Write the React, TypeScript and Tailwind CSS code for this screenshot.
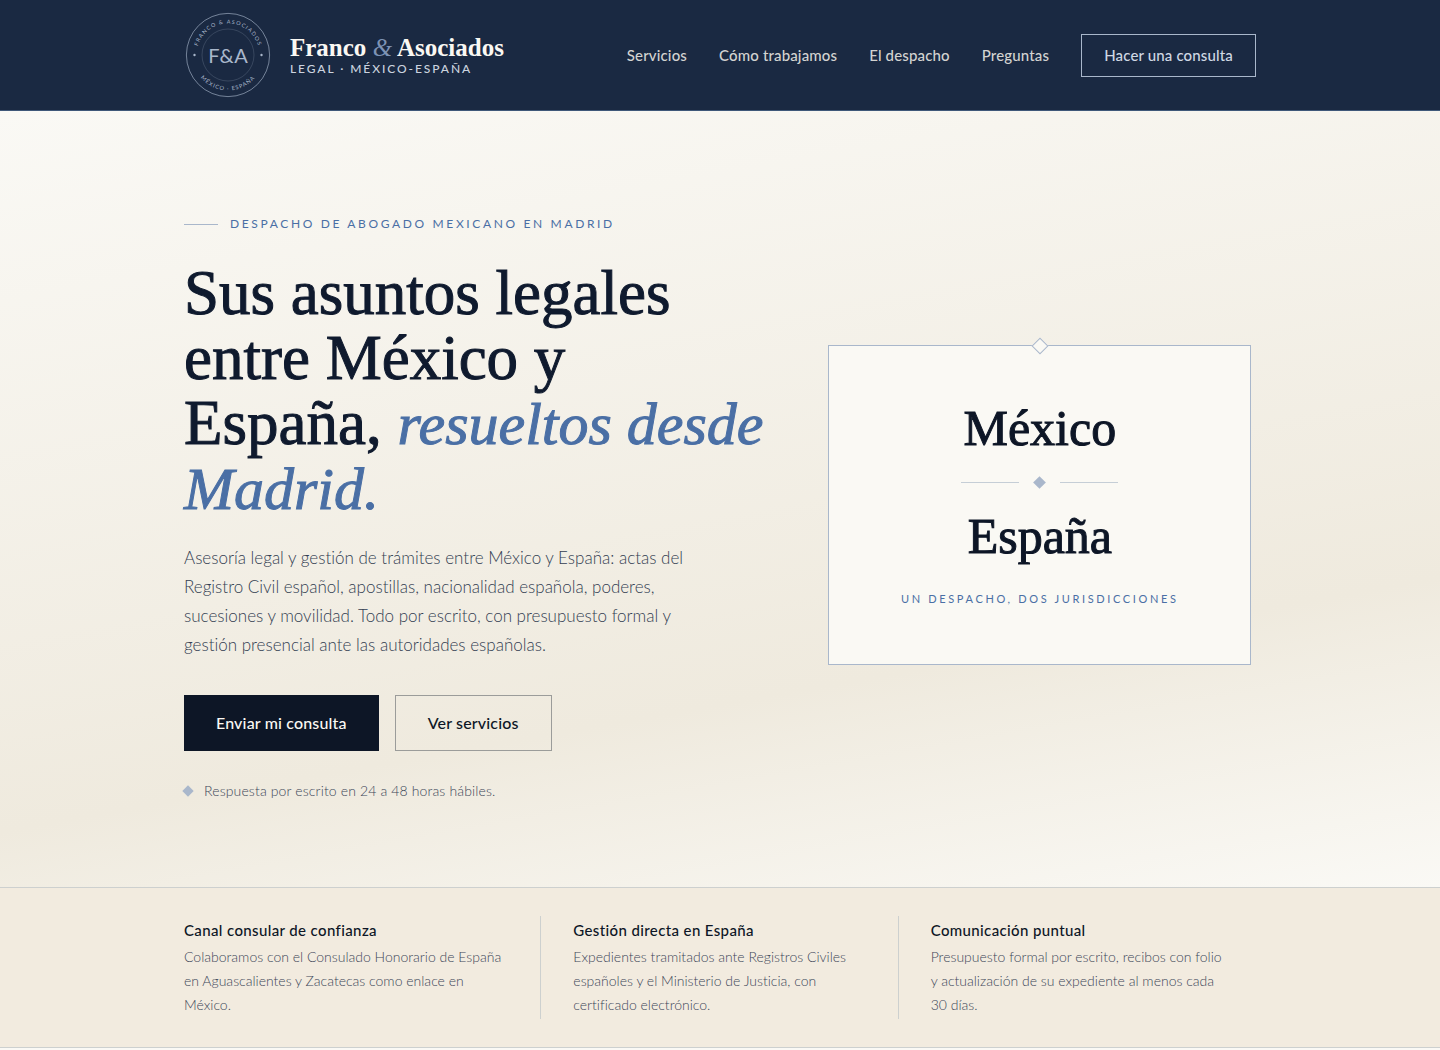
import { clsx } from 'clsx';

/* ─── Content ─── */
const navLinks = [
  { label: 'Servicios', href: '#servicios' },
  { label: 'Cómo trabajamos', href: '#como-trabajamos' },
  { label: 'El despacho', href: '#despacho' },
  { label: 'Preguntas', href: '#preguntas' },
];

const features = [
  {
    title: 'Canal consular de confianza',
    text: 'Colaboramos con el Consulado Honorario de España en Aguascalientes y Zacatecas como enlace en México.',
  },
  {
    title: 'Gestión directa en España',
    text: 'Expedientes tramitados ante Registros Civiles españoles y el Ministerio de Justicia, con certificado electrónico.',
  },
  {
    title: 'Comunicación puntual',
    text: 'Presupuesto formal por escrito, recibos con folio y actualización de su expediente al menos cada 30 días.',
  },
];

const serif = "font-['Liberation_Serif',serif]";

/* ─── Round seal ─── */
function Seal() {
  return (
    <svg viewBox="0 0 88 88" className="size-22 shrink-0 text-[#a9b7cb]" fill="none" aria-hidden="true">
      <defs>
        <path id="seal-top" d="M 12.5 44 A 31.5 31.5 0 0 1 75.5 44" />
        <path id="seal-bottom" d="M 8.5 44 A 35.5 35.5 0 0 0 79.5 44" />
      </defs>
      <circle cx="44" cy="44" r="41.6" stroke="currentColor" strokeWidth="0.8" opacity="0.8" />
      <circle cx="44" cy="44" r="26" stroke="currentColor" strokeWidth="0.6" opacity="0.35" />
      <circle cx="10.5" cy="44" r="1.2" fill="currentColor" />
      <circle cx="77.5" cy="44" r="1.2" fill="currentColor" />
      <g fill="currentColor" textAnchor="middle">
        <text fontSize="5.4" letterSpacing="1.2">
          <textPath href="#seal-top" startOffset="50%">FRANCO &amp; ASOCIADOS</textPath>
        </text>
        <text fontSize="5.6" letterSpacing="1">
          <textPath href="#seal-bottom" startOffset="50%">MÉXICO · ESPAÑA</textPath>
        </text>
        <text x="44" y="52" fontSize="20">F&amp;A</text>
      </g>
    </svg>
  );
}

function Diamond({ className }: { className?: string }) {
  return <span className={clsx('block rotate-45 shrink-0', className)} aria-hidden="true" />;
}

/* ─── Header ─── */
function Header() {
  return (
    <header className="bg-[#1a2942] border-b border-[#3f5879]">
      <div className="max-w-[1120px] mx-auto px-6 py-[11px] flex flex-wrap items-center justify-between gap-6">
        <a href="#inicio" className="flex items-center gap-[18px]">
          <Seal />
          <span className="block">
            <span className={clsx('block text-[25px] leading-7 font-bold text-[#faf8f3]', serif)}>
              Franco <em className="font-normal text-[#7d93b5]">&amp;</em> Asociados
            </span>
            <span className="block text-xs leading-[14px] tracking-[0.16em] font-medium uppercase text-[#cbd3df]">
              Legal · México-España
            </span>
          </span>
        </a>
        <nav
          className="flex flex-wrap items-center gap-8 text-[15px] font-medium tracking-[0.01em] text-[#d3d3d1]"
          aria-label="Principal"
        >
          {navLinks.map((link) => (
            <a key={link.href} href={link.href} className="hover:text-white">
              {link.label}
            </a>
          ))}
          <a
            href="#consulta"
            className="border border-[#a9b7cb] px-[22px] h-[43px] flex items-center text-[#d0d8e4] hover:bg-white/5"
          >
            Hacer una consulta
          </a>
        </nav>
      </div>
    </header>
  );
}

/* ─── Hero ─── */
function Hero() {
  return (
    <section className="bg-[linear-gradient(170deg,#faf9f5_0%,#efeade_70%,#faf9f5_100%)]">
      <div className="max-w-[1120px] mx-auto px-6 pt-24 pb-[84px] grid lg:grid-cols-[27fr_20fr] gap-14 items-center">
        <div>
          <p className="flex items-center gap-3 text-xs leading-[34px] tracking-[0.22em] uppercase text-[#4a6fa5]">
            <span className="w-[34px] h-px bg-[#a9b7cb]" />
            Despacho de abogado mexicano en Madrid
          </p>
          <h1
            className={clsx(
              'mt-5 text-[63px] leading-[65px] text-[#0f1a2e] [-webkit-text-stroke:1px]',
              serif
            )}
          >
            Sus asuntos legales entre México y España,{' '}
            <em className="text-[60px] leading-none text-[#4a6fa5]">resueltos desde Madrid.</em>
          </h1>
          <p className="mt-[22px] max-w-[520px] text-[17px] leading-[29px] font-light text-[#333e52]">
            Asesoría legal y gestión de trámites entre México y España: actas del Registro Civil español,
            apostillas, nacionalidad española, poderes, sucesiones y movilidad. Todo por escrito, con
            presupuesto formal y gestión presencial ante las autoridades españolas.
          </p>
          <div className="mt-9 flex flex-wrap gap-4 text-base font-medium tracking-[0.01em]">
            <a
              href="#consulta"
              className="h-14 px-8 flex items-center bg-[#0d1626] text-[#faf8f3] hover:bg-[#1a2942]"
            >
              Enviar mi consulta
            </a>
            <a
              href="#servicios"
              className="h-14 px-8 flex items-center border border-[#9b9c9a] text-[#0d1626] hover:border-[#0d1626]"
            >
              Ver servicios
            </a>
          </div>
          <p className="mt-7 flex items-center gap-3 text-sm leading-6 tracking-[0.01em] font-light text-[#3d4759]">
            <Diamond className="size-2 bg-[#a9b7cb]" />
            Respuesta por escrito en 24 a 48 horas hábiles.
          </p>
        </div>

        {/* Jurisdictions card */}
        <div className="relative w-full max-w-[423px] justify-self-center border border-[#a9b7cb] bg-[#faf9f4] pt-13 pb-14 px-8 text-center">
          <Diamond className="absolute -top-[6px] left-1/2 -ml-[6px] size-3 border border-[#a9b7cb] bg-[#faf9f4]" />
          <p className={clsx('text-[50px] leading-[60px] text-[#0d1626] [-webkit-text-stroke:1px]', serif)}>México</p>
          <div className="my-4 flex items-center justify-center gap-4 h-4">
            <span className="w-[58px] h-px bg-[#c5ced6]" />
            <Diamond className="size-[9px] bg-[#a9b7cb]" />
            <span className="w-[58px] h-px bg-[#c5ced6]" />
          </div>
          <p className={clsx('text-[50px] leading-[60px] text-[#0d1626] [-webkit-text-stroke:1px]', serif)}>España</p>
          <p className="mt-6 text-[11px] leading-[18px] tracking-[0.24em] uppercase text-[#4a6fa5]">
            Un despacho, dos jurisdicciones
          </p>
        </div>
      </div>
    </section>
  );
}

/* ─── Features ─── */
function Features() {
  return (
    <section className="bg-[#f2ebdf] border-y border-[#cdd0cf]">
      <div className="max-w-[1120px] mx-auto px-6 py-7 grid md:grid-cols-3">
        {features.map((feature, index) => (
          <div
            key={feature.title}
            className={clsx(
              'pb-0.5 md:pr-8',
              index > 0 && 'md:pl-8',
              index < features.length - 1 && 'md:border-r border-[#cdd0cf]'
            )}
          >
            <h2 className="text-[15px] leading-7 font-medium tracking-wide text-[#0d1626]">{feature.title}</h2>
            <p className="mt-px text-sm leading-6 font-light text-[#3d4759]">{feature.text}</p>
          </div>
        ))}
      </div>
    </section>
  );
}

export default function App() {
  return (
    <div className="min-h-screen bg-[#faf9f5] font-['Lato',sans-serif] [font-variant-ligatures:none]">
      <Header />
      <main>
        <Hero />
        <Features />
      </main>
    </div>
  );
}
